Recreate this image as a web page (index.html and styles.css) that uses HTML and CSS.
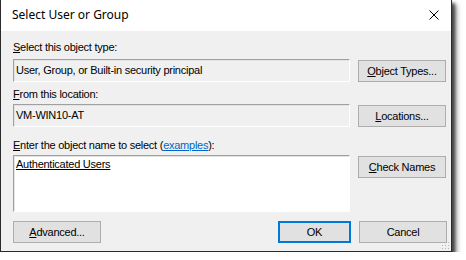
FILE: index.html
```html
<!DOCTYPE html>
<html lang="en">
<head>
    <meta charset="UTF-8">
    <title>Select User or Group</title>
    <link rel="stylesheet" href="styles.css">
</head>
<body>
    <div class="dialog">
        <div class="titlebar">
            <span class="title">Select User or Group</span>
            <svg class="close" width="10" height="10" viewBox="0 0 10 10">
                <path d="M0.5 0.5 L9.5 9.5 M9.5 0.5 L0.5 9.5" stroke="#000" stroke-width="1" fill="none"/>
            </svg>
        </div>
        <div class="content">
            <div class="label first"><u>S</u>elect this object type:</div>
            <div class="row">
                <div class="field">User, Group, or Built-in security principal</div>
                <div class="button"><u>O</u>bject Types...</div>
            </div>

            <div class="label second"><u>F</u>rom this location:</div>
            <div class="row">
                <div class="field">VM-WIN10-AT</div>
                <div class="button"><u>L</u>ocations...</div>
            </div>

            <div class="label third"><u>E</u>nter the object name to select (<a class="link" href="#">examples</a>):</div>
            <div class="row">
                <div class="field big"><u>Authenticated Users</u></div>
                <div class="button"><u>C</u>heck Names</div>
            </div>

            <div class="footer">
                <div class="button"><u>A</u>dvanced...</div>
                <div class="actions">
                    <div class="button default">OK</div>
                    <div class="button">Cancel</div>
                </div>
            </div>
        </div>
        <div class="grip"></div>
    </div>
</body>
</html>
```

FILE: styles.css
```css
/* Reset */
* {
    margin: 0;
    padding: 0;
    box-sizing: border-box;
}

body {
    background-color: #ffffff;
    font-family: "Liberation Sans", Arial, sans-serif;
    font-size: 11px;
    letter-spacing: -0.25px;
    color: #000000;
}

/* Janela do dialogo */
.dialog {
    position: relative;
    width: 452px;
    height: 252px;
    background-color: #f0f0f0;
    border: 1px solid #2b2b2b;
    border-top: none;
    box-shadow: 3px 3px 3px rgba(0, 0, 0, 0.6), 5px 5px 5px rgba(0, 0, 0, 0.35);
}

.titlebar {
    height: 31px;
    background-color: #ffffff;
    display: flex;
    align-items: center;
    justify-content: space-between;
    padding: 0 12px 2px 11px;
}

.title {
    font-family: "Noto Sans", "Open Sans", sans-serif;
    font-size: 12px;
    letter-spacing: 0;
}

.close {
    margin-top: 1px;
}

.content {
    padding: 0 4px 0 12px;
}

.label {
    line-height: 13px;
}

.label.first {
    margin-top: 10px;
    margin-bottom: 5px;
}

.label.second {
    margin-top: 6px;
    margin-bottom: 3px;
}

.label.third {
    margin-top: 12px;
    margin-bottom: 3px;
}

.row {
    display: flex;
    gap: 8px;
    align-items: flex-start;
}

/* Caixas de texto */
.field {
    width: 337px;
    height: 23px;
    padding: 3px 2px;
    line-height: 14px;
    border: 1px solid;
    border-color: #a0a0a0 #ffffff #ffffff #a0a0a0;
    box-shadow: inset 1px 1px 0 #e3e3e3;
}

.field.big {
    height: 57px;
    padding-top: 1px;
    background-color: #ffffff;
}

/* Botoes */
.button {
    width: 88px;
    height: 22px;
    margin-top: 1px;
    background-color: #e1e1e1;
    border: 1px solid #adadad;
    display: flex;
    align-items: center;
    justify-content: center;
    line-height: 13px;
}

.button.default {
    width: 73px;
    border: 2px solid #0078d7;
}

.link {
    color: #0066cc;
}

.footer {
    display: flex;
    justify-content: space-between;
    margin-top: 9px;
}

.actions {
    display: flex;
    gap: 8px;
}

.footer .button {
    margin-top: 0;
}

/* Pontinhos de redimensionar */
.grip {
    position: absolute;
    right: 2px;
    bottom: 2px;
    width: 8px;
    height: 8px;
    background-image: radial-gradient(circle, #b8b8b8 1px, transparent 1px);
    background-size: 3px 3px;
}
```
